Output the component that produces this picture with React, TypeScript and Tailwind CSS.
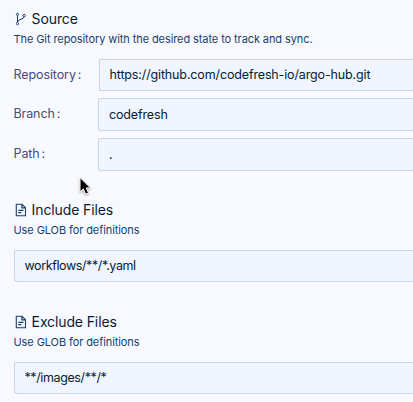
import type { ReactNode } from "react";

function BranchIcon() {
  return (
    <svg width="12" height="14" viewBox="0 0 12 14" fill="none" stroke="#173f6c" strokeWidth="1" className="shrink-0">
      <circle cx="2.5" cy="2.4" r="1.1" />
      <circle cx="2.5" cy="11.6" r="1.1" />
      <circle cx="9.2" cy="3.6" r="1.2" />
      <path d="M2.5 3.5V10.5M9 4.9C8.8 7.8 3.6 6.4 2.6 9.9" />
    </svg>
  );
}

function FileIcon() {
  return (
    <svg width="12" height="14" viewBox="0 0 12 14" fill="none" stroke="#173f6c" strokeWidth="1.1" className="shrink-0">
      <path d="M1.3 1.3H7L10.5 4.7V12.7H1.3ZM6.8 1.4V4.9H10.4M3.3 7.4H8.5M3.3 9.6H6.3" />
    </svg>
  );
}

function Heading({ icon, title, note }: { icon: ReactNode; title: string; note: string }) {
  return (
    <div className="pl-3.5">
      <h2 className="flex h-5 items-center gap-[4.6px] pl-px text-[14px] leading-5 tracking-[-0.12px] text-[#061c33]">
        {icon}
        <span>{title}</span>
      </h2>
      <p className="mt-0.5 -ml-px h-4 pl-[0.5px] text-[11px] leading-4 tracking-[-0.09px] whitespace-nowrap text-[#173f6c]">{note}</p>
    </div>
  );
}

function Field({ label, value, className }: { label: string; value: string; className: string }) {
  return (
    <div className="flex">
      <div className="w-[98px] shrink-0 pl-[13.5px] text-[12.5px] leading-[31px] tracking-[-0.1px] text-[#484b7b]">
        {label}<span className="ml-0.5">:</span>
      </div>
      <div className={`flex-1 border border-r-0 border-[#cad6e8] bg-[#f0f5ff] text-[12.5px] tracking-[-0.14px] whitespace-nowrap text-[#061c33] ${className}`}>
        {value}
      </div>
    </div>
  );
}

function GlobInput({ value }: { value: string }) {
  return (
    <div className="ml-3.5 h-8 rounded-l-[3px] border border-r-0 border-[#cad6e8] bg-[#f0f5ff] pl-[9.5px] text-[12.5px] leading-[30px] tracking-[-0.39px] text-[#061c33]">
      {value}
    </div>
  );
}

function Cursor() {
  return (
    <svg width="16" height="22" viewBox="0 0 16 22" className="absolute top-[176px] left-[78px] drop-shadow-[0_1px_1px_rgba(0,0,0,0.35)]">
      <path d="M2 1.5V16L5.3 12.9L7.6 18.2L10.5 16.9L8.2 11.9H12.5Z" fill="#000" stroke="#fff" strokeWidth="1" />
    </svg>
  );
}

export default function App() {
  return (
    <main className="relative h-[402px] w-[413px] overflow-hidden bg-[#f8f9ff] pt-[9px] font-['Inter',sans-serif]">
      <Heading icon={<BranchIcon />} title="Source" note="The Git repository with the desired state to track and sync." />
      <div className="mt-3 flex flex-col">
        <Field label="Repository" value="https://github.com/codefresh-io/argo-hub.git" className="ml-px h-8 pl-[9.5px] leading-[30px]" />
        <div className="mt-[7px]">
          <Field label="Branch" value="codefresh" className="h-[33px] rounded-l-[3px] pl-2.5 leading-[31px]" />
        </div>
        <div className="mt-[7px]">
          <Field label="Path" value="." className="h-[33px] rounded-l-[3px] pl-2.5 leading-[31px]" />
        </div>
      </div>
      <section className="mt-[29px]">
        <Heading icon={<FileIcon />} title="Include Files" note="Use GLOB for definitions" />
        <div className="mt-3"><GlobInput value="workflows/**/*.yaml" /></div>
      </section>
      <section className="mt-[30px]">
        <Heading icon={<FileIcon />} title="Exclude Files" note="Use GLOB for definitions" />
        <div className="mt-3"><GlobInput value="**/images/**/*" /></div>
      </section>
      <Cursor />
    </main>
  );
}
